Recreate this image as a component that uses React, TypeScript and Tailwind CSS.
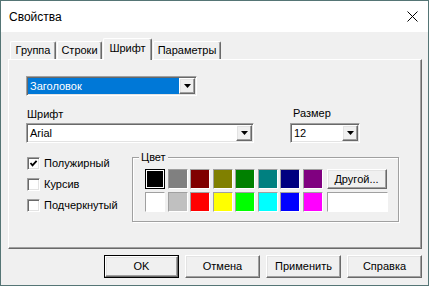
import React from "react";

const raised =
  "border border-t-white border-l-white border-r-[#696969] border-b-[#696969] shadow-[inset_-1px_-1px_0_#a0a0a0,inset_1px_1px_0_#e3e3e3] bg-[#f0f0f0]";
const sunken =
  "border border-t-[#a0a0a0] border-l-[#a0a0a0] border-r-white border-b-white shadow-[inset_1px_1px_0_#696969,inset_-1px_-1px_0_#e3e3e3] bg-white";

const row1 = ["#000000", "#808080", "#800000", "#808000", "#008000", "#008080", "#000080", "#800080"];
const row2 = ["#ffffff", "#c0c0c0", "#ff0000", "#ffff00", "#00ff00", "#00ffff", "#0000ff", "#ff00ff"];

function Arrow() {
  return (
    <svg width="7" height="4" viewBox="0 0 7 4">
      <path d="M0 0H7L3.5 4Z" fill="#000" />
    </svg>
  );
}

function Combo({
  className,
  text,
  selected,
}: {
  className: string;
  text: string;
  selected?: boolean;
}) {
  return (
    <div className={`${sunken} ${className} h-[20px] p-[1px] flex`}>
      <div
        className={`flex-1 flex items-center pl-[2px] ${
          selected ? "bg-[#0078d7] text-white" : "text-black"
        }`}
      >
        {text}
      </div>
      <div className={`${raised} w-[16px] h-full flex items-center justify-center`}>
        <Arrow />
      </div>
    </div>
  );
}

function Check({ label, checked }: { label: string; checked?: boolean }) {
  return (
    <div className="flex items-center h-[13px]">
      <div className={`${sunken} w-[13px] h-[13px] flex items-center justify-center`}>
        {checked && (
          <svg width="9" height="9" viewBox="0 0 9 9">
            <path d="M1.5 4L3.5 6.3L7.6 1.8" stroke="#000" strokeWidth="1.8" fill="none" />
          </svg>
        )}
      </div>
      <span className="ml-[4px] leading-[13px]">{label}</span>
    </div>
  );
}

function Swatch({ color, active }: { color: string; active?: boolean }) {
  if (active) {
    return (
      <div className="w-[20px] h-[20px] border border-black">
        <div className="w-full h-full border border-white" style={{ backgroundColor: color }} />
      </div>
    );
  }
  return (
    <div
      className="w-[20px] h-[20px] border border-t-[#a0a0a0] border-l-[#a0a0a0] border-r-white border-b-white"
      style={{ backgroundColor: color }}
    />
  );
}

function Tab({ label, w, active }: { label: string; w: string; active?: boolean }) {
  if (active) {
    return (
      <div
        className={`${w} h-[22px] -mb-[1px] relative z-10 bg-[#f0f0f0] border-t border-l border-r border-t-white border-l-white border-r-[#696969] shadow-[inset_-1px_0_0_#a0a0a0] rounded-t-[2px] flex items-center justify-center pb-[2px]`}
      >
        {label}
      </div>
    );
  }
  return (
    <div
      className={`${w} h-[18px] bg-[#f0f0f0] border-t border-l border-r border-t-white border-l-white border-r-[#696969] shadow-[inset_-1px_0_0_#a0a0a0] rounded-t-[2px] flex items-center justify-center`}
    >
      {label}
    </div>
  );
}

function Button({ label, def }: { label: string; def?: boolean }) {
  if (def) {
    return (
      <div className="w-[75px] h-[23px] border border-[#000]">
        <div className={`${raised} w-full h-full flex items-center justify-center`}>{label}</div>
      </div>
    );
  }
  return (
    <div className={`${raised} w-[75px] h-[23px] flex items-center justify-center`}>{label}</div>
  );
}

export default function App() {
  return (
    <div className="w-[429px] h-[286px] border border-[#557575] bg-[#f0f0f0] flex flex-col font-['Liberation_Sans',Arial,sans-serif] text-[11px] text-black overflow-hidden">
      {/* title bar */}
      <div className="h-[31px] bg-white flex items-center justify-between pl-[8px] pr-[10px]">
        <span className="text-[12px]">Свойства</span>
        <svg width="11" height="11" viewBox="0 0 11 11">
          <path d="M0.5 0.5L10.5 10.5M10.5 0.5L0.5 10.5" stroke="#000" strokeWidth="1" />
        </svg>
      </div>

      <div className="flex flex-col pt-[6px] pl-[7px]">
        <div className="flex items-end gap-[1px] pl-[2px] h-[21px]">
          <Tab label="Группа" w="w-[46px]" />
          <Tab label="Строки" w="w-[45px]" />
          <Tab label="Шрифт" w="w-[49px]" active />
          <Tab label="Параметры" w="w-[68px]" />
        </div>

        <div className="w-[414px] h-[190px] border border-t-white border-l-white border-r-[#696969] border-b-[#696969] shadow-[inset_-1px_-1px_0_#a0a0a0] pt-[16px] pl-[17px] flex flex-col">
          <Combo className="w-[171px]" text="Заголовок" selected />

          <div className="flex mt-[11px]">
            <div className="flex flex-col w-[228px]">
              <div className="h-[14px] leading-[14px] pl-[1px]">Шрифт</div>
              <Combo className="w-[228px] mt-[2px]" text="Arial" />
            </div>
            <div className="flex flex-col ml-[36px]">
              <div className="h-[14px] leading-[14px] pl-[3px] -mt-[1px] mb-[1px]">Размер</div>
              <Combo className="w-[70px] mt-[2px]" text="12" />
            </div>
          </div>

          <div className="flex mt-[8px]">
            <div className="w-[106px] pl-[1px] pt-[6px] flex flex-col gap-[8px]">
              <Check label="Полужирный" checked />
              <Check label="Курсив" />
              <Check label="Подчеркнутый" />
            </div>

            <div className="pt-[6px]">
              <div className="relative w-[267px] h-[65px] border border-[#a0a0a0] shadow-[inset_1px_1px_0_#fff,1px_1px_0_#fff] pt-[11px] pl-[12px] flex">
                <span className="absolute -top-[7px] left-[6px] px-[2px] bg-[#f0f0f0] leading-[13px]">
                  Цвет
                </span>
                <div className="flex flex-col gap-[3px]">
                  <div className="flex gap-x-[2.5px]">
                    {row1.map((c, i) => (
                      <Swatch key={c} color={c} active={i === 0} />
                    ))}
                  </div>
                  <div className="flex gap-x-[2.5px]">
                    {row2.map((c) => (
                      <Swatch key={c} color={c} />
                    ))}
                  </div>
                </div>
                <div className="flex flex-col gap-[3px] ml-[4px]">
                  <div className={`${raised} w-[60px] h-[20px] flex items-center justify-center`}>
                    Другой...
                  </div>
                  <div className="w-[61px] h-[20px] bg-white border border-t-[#a0a0a0] border-l-[#a0a0a0] border-r-white border-b-white" />
                </div>
              </div>
            </div>
          </div>
        </div>

        <div className="w-[414px] flex justify-end gap-[6px] mt-[6px]">
          <Button label="OK" def />
          <Button label="Отмена" />
          <Button label="Применить" />
          <Button label="Справка" />
        </div>
      </div>
    </div>
  );
}
